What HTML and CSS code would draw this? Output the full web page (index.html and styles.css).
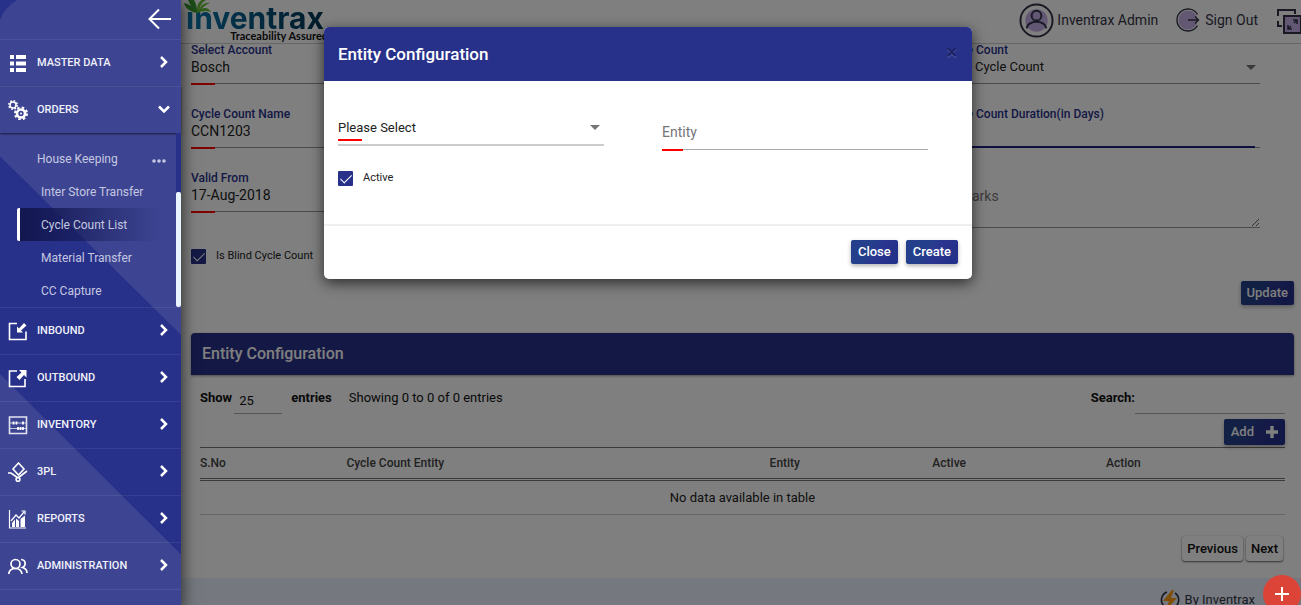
FILE: index.html
```html
<!DOCTYPE html>
<html lang="en">
<head>
<meta charset="utf-8">
<title>Inventrax - Cycle Count</title>
<link rel="stylesheet" href="styles.css">
</head>
<body>
<div class="app">
  <nav class="sidebar">
    <svg class="sidebar-art" viewBox="0 0 181 605" preserveAspectRatio="none" aria-hidden="true">
      <path d="M17 0H181V332L0 155V20Q4 8 17 0Z M0 371L181 550V605H0Z" fill="#3d4593"/>
    </svg>
    <div class="nav-top">
      <button class="collapse" aria-label="Collapse menu">
        <svg width="24" height="22" viewBox="0 0 24 22" fill="none" stroke="#fff" stroke-width="2"><path d="M23 11H2M11 1.500L1.500 11L11 20.500"/></svg>
      </button>
    </div>
    <a class="nav-item" href="#">
      <svg class="nav-icon" viewBox="0 0 20 20" fill="#fff"><path d="M2 2h4v4H2zM8 2h10v4H8zM2 8.500h4v4H2zM8 8.500h10v4H8zM2 15h4v4H2zM8 15h10v4H8z"/></svg>
      <span>MASTER DATA</span>
      <svg class="chev" viewBox="0 0 12 12"><path d="M3 1L8 6L3 11"/></svg>
    </a>
    <a class="nav-item open" href="#">
      <svg class="nav-icon" viewBox="0 0 20 20" fill="none" stroke="#fff"><circle cx="5" cy="5" r="3" stroke-width="1.500"/><circle cx="5" cy="5" r="4.200" stroke-width="1.600" stroke-dasharray="1.700 1.600"/><circle cx="13" cy="13.500" r="4" stroke-width="2.600"/><circle cx="13" cy="13.500" r="6" stroke-width="2" stroke-dasharray="2.500 2.212"/><circle cx="13" cy="13.500" r="1" fill="#fff" stroke="none"/></svg>
      <span>ORDERS</span>
      <svg class="chev" viewBox="0 0 12 12"><path d="M1 3.500L6 8.500L11 3.500"/></svg>
    </a>
    <div class="submenu">
      <a class="sub-head" href="#"><span>House Keeping</span>
        <svg width="14" height="4" viewBox="0 0 14 4" fill="#c5c8e0"><circle cx="2" cy="2" r="1.800"/><circle cx="7" cy="2" r="1.800"/><circle cx="12" cy="2" r="1.800"/></svg></a>
      <a class="sub-item" href="#">Inter Store Transfer</a>
      <a class="sub-item current" href="#">Cycle Count List</a>
      <a class="sub-item" href="#">Material Transfer</a>
      <a class="sub-item" href="#">CC Capture</a>
      <span class="scroll-thumb"></span>
    </div>
    <a class="nav-item" href="#">
      <svg class="nav-icon" viewBox="0 0 20 20" fill="none" stroke="#fff" stroke-width="1.600"><path d="M9 2.500H1.500V18.500H18V10.500"/><path d="M9 11.500V5.500L11 7.500L16 2L18.500 4.500L13 9.500L15 11.500Z" fill="#fff" stroke="none"/></svg>
      <span>INBOUND</span>
      <svg class="chev" viewBox="0 0 12 12"><path d="M3 1L8 6L3 11"/></svg>
    </a>
    <a class="nav-item" href="#">
      <svg class="nav-icon" viewBox="0 0 20 20" fill="none" stroke="#fff" stroke-width="1.600"><path d="M9 3H1.500V18.500H17V11"/><path d="M11 2H18.500V9.500L16 7L11.500 12L8.500 9L13.500 4.500Z" fill="#fff" stroke="none"/></svg>
      <span>OUTBOUND</span>
      <svg class="chev" viewBox="0 0 12 12"><path d="M3 1L8 6L3 11"/></svg>
    </a>
    <a class="nav-item" href="#">
      <svg class="nav-icon" viewBox="0 0 20 20" fill="none" stroke="#fff" stroke-width="1.300"><path d="M1.500 2H18.500V18.500H1.500Z" stroke-width="1.600" opacity=".85"/><path d="M2 8H18M2 13.500H18" stroke-width="1" opacity=".7"/><path d="M5.500 6.500v3M8.500 6.500v3M15 6.500v3M10 12v3M12.500 12v3M15 12v3" stroke-width="1.800"/></svg>
      <span>INVENTORY</span>
      <svg class="chev" viewBox="0 0 12 12"><path d="M3 1L8 6L3 11"/></svg>
    </a>
    <a class="nav-item" href="#">
      <svg class="nav-icon" viewBox="0 0 20 20" fill="none" stroke="#fff" stroke-width="1.600"><path d="M10.500 1L16 7L10.500 13L5 7ZM0 11H3L10 16L19 9"/><circle cx="10" cy="17.500" r="1.900" fill="#3d4593"/></svg>
      <span>3PL</span>
      <svg class="chev" viewBox="0 0 12 12"><path d="M3 1L8 6L3 11"/></svg>
    </a>
    <a class="nav-item" href="#">
      <svg class="nav-icon" viewBox="0 0 20 20" fill="none" stroke="#fff" stroke-width="1.200"><path d="M1.500 1V19H18M3 12L8 6L11 9L16 3M13.500 2H17V5.500"/><path d="M4 18V14L7 10.500V18ZM8 18V9.500L11 12V18ZM12.500 18V10L17 6.500V18Z" fill="#fff" stroke="none"/></svg>
      <span>REPORTS</span>
      <svg class="chev" viewBox="0 0 12 12"><path d="M3 1L8 6L3 11"/></svg>
    </a>
    <a class="nav-item" href="#">
      <svg class="nav-icon" viewBox="0 0 20 20" fill="none" stroke="#fff" stroke-width="1.700"><circle cx="7.500" cy="8" r="4.500"/><path d="M.8 18C1 14.500 3 12.500 7.500 12.500S13.500 14.500 14 18M13 3.500C18.500 4 18 10 14.500 11.500C18 12.500 19 14.500 19 17"/></svg>
      <span>ADMINISTRATION</span>
      <svg class="chev" viewBox="0 0 12 12"><path d="M3 1L8 6L3 11"/></svg>
    </a>
    <div class="nav-end"></div>
  </nav>

  <main class="main">
    <header class="topbar">
      <a class="logo" href="#">
        <svg class="leaf" width="28" height="14" viewBox="0 0 28 14"><path d="M13 13C4 11 1 7 0 3C5 4 9 7 12 11C8 7 5 4 4 0H10C12 3 13 7 13 11Z" fill="#3b9b2f"/><path d="M13 12C13 6 14 2 18 0H22C18 2 16 6 15 10C17 5 21 2 26 3C22 4 20 7 17 9C21 7 25 8 27 12C22 10 18 11 13 13Z" fill="#62b832"/></svg>
        <span class="logo-name">inventrax</span>
        <span class="logo-tag">Traceability Assured</span>
      </a>
      <div class="user-links">
        <a href="#"><svg width="35" height="35" viewBox="0 0 36 36" fill="none" stroke="#333346" stroke-width="2"><circle cx="18" cy="18" r="11.500" fill="#c5b0e8" stroke="none"/><circle cx="18" cy="18" r="16.500"/><circle cx="18" cy="13" r="5"/><path d="M8 26C9 17 27 17 28 26"/></svg>Inventrax Admin</a>
        <a href="#" class="signout"><svg width="24" height="24" viewBox="0 0 24 24" fill="none" stroke="#333346" stroke-width="1.400"><circle cx="12" cy="12" r="9.500" fill="#c5b0e8" stroke="none"/><path d="M21.500 6.500A11 11 0 1 0 21.500 17.500M12 12H22.500M19 8.500L22.500 12L19 15.500"/></svg>Sign Out</a>
        <button class="expand" aria-label="Full screen"><svg width="24" height="25" viewBox="0 0 24 25" fill="none" stroke="#333346" stroke-width="2"><path d="M1 7V1H18V5M1 12V17H5"/><path d="M7 7H24V24H7Z" fill="#c5b0e8"/><path d="M11 20L14 17M17 14L20 11M16 11H20V15M11 16V20H15" stroke-width="1.500"/></svg></button>
      </div>
    </header>

    <form class="count-form">
      <div class="fields">
        <div class="field req"><label for="acc">Select Account</label><input id="acc" value="Bosch"></div>
        <div class="field"></div>
        <div class="field sel"><label for="ctype">Cycle Count</label><select id="ctype"><option>Daily Cycle Count</option></select></div>
        <div class="field req"><label for="cname">Cycle Count Name</label><input id="cname" value="CCN1203"></div>
        <div class="field"></div>
        <div class="field focus"><label for="dur">Cycle Count Duration(in Days)</label><input id="dur"></div>
        <div class="field req"><label for="from">Valid From</label><input id="from" value="17-Aug-2018"></div>
        <div class="field"></div>
        <div class="field remarks"><textarea aria-label="Remarks" placeholder="Remarks"></textarea></div>
      </div>
      <label class="check"><input type="checkbox" checked>Is Blind Cycle Count</label>
      <div class="form-actions"><button type="button" class="btn">Update</button></div>
    </form>

    <section class="entities">
      <h2>Entity Configuration</h2>
      <div class="table-area">
        <div class="table-tools">
          <label class="length"><b>Show</b><input value="25" aria-label="Entries per page"><b>entries</b></label>
          <span class="info">Showing 0 to 0 of 0 entries</span>
          <label class="search"><b>Search:</b><input type="search"></label>
        </div>
        <div class="add-row"><button class="btn add">Add <svg width="12" height="12" viewBox="0 0 12 12" fill="#fff"><path d="M4.300 0H7.700V4.300H12V7.700H7.700V12H4.300V7.700H0V4.300H4.300Z"/></svg></button></div>
        <table>
          <thead><tr><th class="c-no">S.No</th><th class="c-count">Cycle Count Entity</th><th class="c-entity">Entity</th><th class="c-active">Active</th><th>Action</th></tr></thead>
          <tbody><tr><td colspan="5">No data available in table</td></tr></tbody>
        </table>
        <div class="pager"><button>Previous</button><button>Next</button></div>
      </div>
    </section>

    <footer class="footer"><a href="#"><svg width="20" height="20" viewBox="0 0 20 20" fill="none" stroke="#333346" stroke-width="1.600"><path d="M7 2A8.500 8.500 0 0 0 4 16M15 3A8.500 8.500 0 0 1 13 18"/><path d="M12 0L3 11H9L6 20L17 8H11L14 0Z" fill="#ff9f0f" stroke="none"/></svg>By Inventrax</a></footer>
  </main>
</div>

<div class="backdrop">
  <div class="modal" role="dialog" aria-labelledby="mtitle">
    <div class="modal-head"><h1 id="mtitle">Entity Configuration</h1><button class="close" aria-label="Dismiss">×</button></div>
    <div class="modal-body">
      <div class="m-select"><select aria-label="Cycle count entity"><option>Please Select</option></select></div>
      <div class="m-entity"><input aria-label="Entity" placeholder="Entity"></div>
      <label class="check"><input type="checkbox" checked>Active</label>
    </div>
    <div class="modal-foot"><button class="btn">Close</button><button class="btn">Create</button></div>
  </div>
</div>
<button class="fab" aria-label="New"><svg width="14" height="14" viewBox="0 0 14 14" stroke="#fff" stroke-width="2"><path d="M7 0V14M0 7H14"/></svg></button>
</body>
</html>
```
FILE: styles.css
```css
* { box-sizing: border-box; }
body { margin: 0; font: 13px/16px Roboto, sans-serif; color: #222; height: 100vh; overflow: hidden; position: relative; }
a { color: inherit; text-decoration: none; }
button, input, select, textarea { font: inherit; color: inherit; border: 0; border-radius: 0; background: transparent; padding: 0; margin: 0; outline: 0; }
svg { flex: none; display: block; }

.app { display: flex; min-height: 100vh; }

.sidebar { position: relative; z-index: 3; isolation: isolate; width: 181px; flex: none; background: #28318a; color: #f0f1fa; box-shadow: 2px 0 14px rgba(0, 0, 0, .6); display: flex; flex-direction: column; }
.sidebar-art { position: absolute; inset: 0; width: 100%; height: 100%; z-index: -1; }
.nav-top { height: 39px; display: flex; justify-content: flex-end; align-items: center; padding: 0 9px 2px 0; }
.nav-item { height: 47px; flex: none; display: flex; align-items: center; padding: 0 11px 0 8px; border-top: 1px solid rgba(255, 255, 255, .07); font-size: 11px; font-weight: 500; }
.nav-item span { flex: 1; margin-left: 9px; }
.nav-icon { width: 20px; height: 20px; }
.chev { width: 12px; height: 12px; margin-bottom: 2px; fill: none; stroke: #fff; stroke-width: 2.500; }
.open { box-shadow: 0 1px 2px rgba(0, 0, 0, .6); }
.submenu { position: relative; height: 174px; flex: none; padding-top: 9px; font-size: 12px; color: #c5c8e0; }
.sub-head { display: flex; align-items: center; justify-content: space-between; height: 33px; padding: 0 15px 0 37px; }
.sub-head svg { margin-top: 5px; }
.sub-item { display: flex; align-items: center; height: 33px; margin-left: 17px; padding-left: 24px; }
.current { padding-left: 21px; border-left: 3px solid #fff; border-radius: 2px; background: linear-gradient(90deg, #12174f, rgba(18, 23, 79, 0) 88%); }
.scroll-thumb { position: absolute; right: 0; top: 59px; width: 5px; height: 115px; border-radius: 2px; background: #eaf5ff; }
.submenu::after { content: ""; position: absolute; right: 0; top: 0; width: 5px; height: 59px; background: #28318a; }
.nav-end { border-top: 1px solid rgba(255, 255, 255, .07); }

.main { flex: 1; min-width: 0; display: flex; flex-direction: column; }
.topbar { height: 44px; flex: none; display: flex; justify-content: space-between; border-bottom: 1px solid #ccc; padding-left: 5px; }
.logo { position: relative; display: flex; flex-direction: column; width: 142px; white-space: nowrap; }
.leaf { position: absolute; left: -2px; top: 0; }
.logo-name { font: 700 30px/36px Inter, sans-serif; background: linear-gradient(90deg, #0a79b0, #00324f); background-clip: text; -webkit-background-clip: text; color: transparent; }
.logo-tag { font: 700 11px/10px Lato, sans-serif; color: #111; text-align: right; margin-top: -5px; }
.user-links { display: flex; align-items: flex-start; font-size: 14px; color: #333346; padding-top: 2px; }
.user-links a { display: flex; align-items: center; gap: 3px; height: 36px; }
.user-links .signout { margin: 0 19px 0 18px; gap: 5px; }
.expand { margin-top: 7px; }

.count-form { padding: 0 7px 0 10px; }
.fields { display: grid; grid-template-columns: repeat(3, 1fr); gap: 24px 60px; padding-right: 34px; margin-bottom: 18px; }
.field { display: flex; flex-direction: column; position: relative; height: 40px; }
.field label { font-size: 12px; line-height: 12px; font-weight: 500; color: #28318a; }
.field input, .field select { height: 28px; padding-bottom: 6px; border-bottom: 1px solid #999; font-size: 14px; }
.field select { font-size: 13px; }
.field.req::after, .m-select::before, .m-entity::after { content: ""; position: absolute; left: 0; bottom: -1px; width: 24px; height: 2px; background: #f00; }
select { appearance: none; }
.sel::after, .m-select::after { content: ""; position: absolute; right: 4px; top: 21px; border: 5px solid transparent; border-top-color: #757575; border-bottom: 0; }
.focus::after { content: ""; position: absolute; left: 0; right: 5px; bottom: 0; height: 2px; background: #1a2080; }
.remarks { height: 56px; padding-top: 12px; }
.remarks textarea { height: 44px; padding-top: 4px; font-size: 14px; border-bottom: 1px solid #999; resize: vertical; }
.remarks ::placeholder, .m-entity ::placeholder { color: #757575; opacity: 1; }
.check { display: flex; align-items: center; gap: 10px; height: 20px; font-size: 11px; }
.check input { appearance: none; width: 15px; height: 15px; border-radius: 1px; background: #28318a; position: relative; }
.check input::after { content: ""; position: absolute; left: 5px; top: 1px; width: 5px; height: 10px; border: solid #fff; border-width: 0 1px 1px 0; transform: rotate(45deg); }
.form-actions { display: flex; justify-content: flex-end; margin-top: 15px; }
.btn { height: 24px; padding: 0 7px; border-radius: 2px; color: #fff; font-size: 13px; font-weight: 500; background: linear-gradient(120deg, #24408c 0 35%, #2b348f 60%, #24318a 80%); box-shadow: 0 2px 4px rgba(0, 0, 0, .3); }
.form-actions .btn { padding: 0 6px; }

.entities { margin: 28px 7px 0 10px; }
.entities h2 { margin: 0; height: 42px; padding-left: 11px; font-size: 16px; line-height: 42px; font-weight: 500; color: #fff; background: #28318a; border-radius: 4px 4px 0 0; box-shadow: 0 1px 3px rgba(0, 0, 0, .4); }
.table-area { padding: 9px 9px 0; }
.table-tools { display: flex; height: 30px; color: #111; }
.table-tools b { font-weight: 700; line-height: 28px; }
.length, .search { display: flex; }
.length input { width: 48px; margin: 0 9px 0 2px; padding: 4px 5px 0; border-bottom: 1px solid #aaa; }
.info { line-height: 28px; margin-left: 17px; flex: 1; }
.search input { width: 150px; border-bottom: 1px solid #aaa; }
.add-row { display: flex; justify-content: flex-end; margin: 5px 0 2px; }
.add { display: flex; align-items: center; gap: 12px; height: 26px; }
table { width: 100%; border-collapse: separate; border-spacing: 0; table-layout: fixed; }
th { height: 34px; padding: 0; text-align: left; font-size: 12px; font-weight: 500; color: #444; border-top: 1px solid #777; border-bottom: 3px double #777; }
td { height: 34px; padding: 0; text-align: center; border-bottom: 1px solid #ccc; }
.c-no { width: 13.5%; }
.c-count { width: 39%; }
.c-entity { width: 15%; }
.c-active { width: 16%; }
.pager { display: flex; justify-content: flex-end; gap: 3px; margin-top: 21px; padding-right: 2px; }
.pager button { height: 25px; padding: 0 5px; font-weight: 500; color: #111; border-radius: 3px; box-shadow: 0 1px 2px rgba(0, 0, 0, .6), 0 0 1px rgba(0, 0, 0, .3); background: #fff; }
.footer { flex: 1; margin-top: 17px; min-height: 27px; background: #eaf2ff; display: flex; justify-content: flex-end; padding: 12px 46px 0 0; overflow: hidden; color: #333346; }
.footer a { display: flex; align-items: center; gap: 5px; height: 20px; }

.backdrop { position: absolute; inset: 0; z-index: 2; background: rgba(0, 0, 0, .5); padding: 27px 5px 0 0; }
.modal { max-width: 648px; margin: 0 auto; background: #fff; border-radius: 5px; overflow: hidden; box-shadow: 0 4px 14px rgba(0, 0, 0, .65); }
.modal-head { height: 54px; padding: 0 14px; display: flex; align-items: center; justify-content: space-between; background: #28318a; }
.modal-head h1 { margin: 0; font-size: 17px; font-weight: 500; color: #fff; }
.close { font-size: 20px; font-weight: 700; color: #1c2368; text-shadow: 0 1px 0 #5860a8; padding: 0 1px 4px 0; }
.modal-body { height: 145px; padding: 34px 44px 0 14px; display: grid; grid-template-columns: 1fr 1fr; grid-template-rows: 36px 20px; gap: 17px 58px; border-bottom: 2px solid #efefef; }
.m-select, .m-entity { position: relative; display: flex; }
.m-select select { flex: 1; height: 31px; padding-bottom: 4px; border-bottom: 2px solid #ccc; }
.m-select::before { bottom: 10px; }
.m-select::after { top: 10px; }
.m-entity input { flex: 1; min-width: 0; height: 35px; font-size: 14px; border-bottom: 1px solid #aaa; }
.m-entity::after { width: 21px; bottom: 0; }
.modal-foot { display: flex; align-items: center; justify-content: flex-end; gap: 8px; height: 53px; padding: 0 14px 2px; }

.fab { position: absolute; z-index: 5; right: 0; top: 575px; width: 38px; height: 38px; display: flex; align-items: center; justify-content: center; border-radius: 50%; background: #dc4437; }
```
